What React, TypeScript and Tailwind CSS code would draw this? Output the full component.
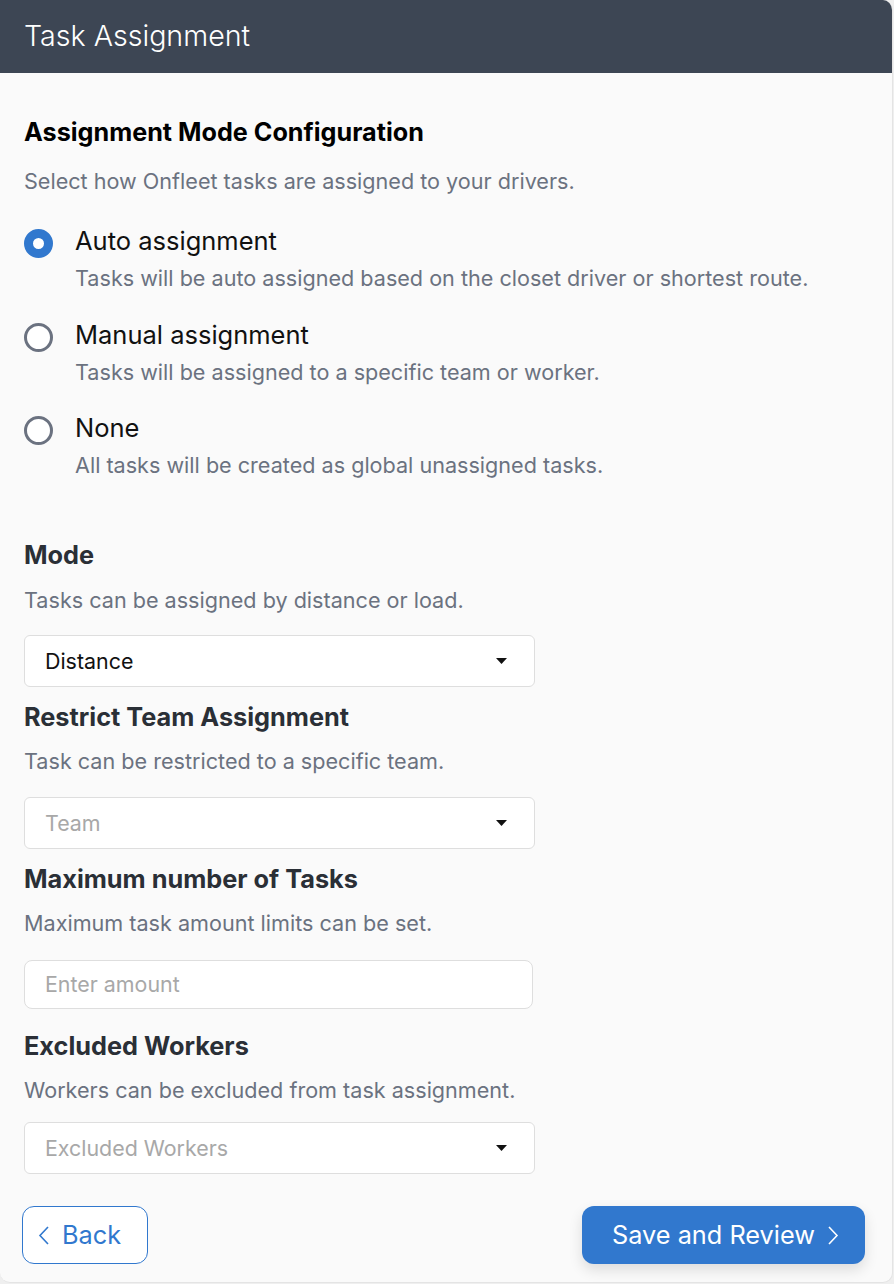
import React from "react";

const font = { fontFamily: "Inter, 'Noto Sans', sans-serif" };

function Radio({ checked }: { checked?: boolean }) {
  return checked ? (
    <span className="mt-[3px] box-border block h-[29px] w-[29px] shrink-0 rounded-full border-[9px] border-[#3178ce] bg-white" />
  ) : (
    <span className="mt-[3px] box-border block h-[29px] w-[29px] shrink-0 rounded-full border-[3px] border-[#6b7280] bg-white" />
  );
}

function Option({ label, desc, checked, className }: { label: string; desc: string; checked?: boolean; className?: string }) {
  return (
    <div className={"flex items-start gap-[22px] " + (className ?? "")}>
      <Radio checked={checked} />
      <div className="flex flex-col">
        <div className="text-[25.5px] leading-[30px] text-[#111]">{label}</div>
        <div className="mt-[8px] text-[21.6px] leading-[28px] text-[#6b7280]">{desc}</div>
      </div>
    </div>
  );
}

function Caret() {
  return (
    <svg width="11" height="6" viewBox="0 0 11 6" className="shrink-0">
      <path d="M0 0 H11 L5.5 6 Z" fill="#111" />
    </svg>
  );
}

function Select({ value, placeholder, className }: { value?: string; placeholder?: string; className?: string }) {
  return (
    <div className={"box-border flex h-[52px] w-[511px] items-center justify-between rounded-[6px] border border-[#dedede] bg-white pl-[20px] pr-[27px] " + (className ?? "")}>
      <span className={"text-[21.4px] " + (value ? "text-[#111]" : "text-[#a8a8a8]")}>{value ?? placeholder}</span>
      <Caret />
    </div>
  );
}

function Heading({ children, className }: { children: React.ReactNode; className?: string }) {
  return <div className={"text-[25.3px] font-bold leading-[30px] text-[#2a2f36] " + (className ?? "")}>{children}</div>;
}

function Desc({ children, className }: { children: React.ReactNode; className?: string }) {
  return <div className={"text-[21.6px] leading-[28px] text-[#6b7280] " + (className ?? "")}>{children}</div>;
}

export default function App() {
  return (
    <div className="min-h-[1284px] w-[894px] bg-[#efefef]" style={font}>
      <div className="box-border w-[893px] overflow-hidden rounded-r-[10px] rounded-bl-[10px] border-r border-b border-[#e4e4e4] bg-[#fafafa]">
        <div className="flex h-[73px] items-center bg-[#3d4654] pl-[24px]">
          <span className="text-[28.6px] font-light text-white">Task Assignment</span>
        </div>
        <div className="flex flex-col px-[24px] pb-[18px]">
          <div className="mt-[44px] text-[25.2px] font-bold leading-[30px] text-black">Assignment Mode Configuration</div>
          <Desc className="mt-[20px]">Select how Onfleet tasks are assigned to your drivers.</Desc>

          <Option className="mt-[31px]" checked label="Auto assignment" desc="Tasks will be auto assigned based on the closet driver or shortest route." />
          <Option className="mt-[28px]" label="Manual assignment" desc="Tasks will be assigned to a specific team or worker." />
          <Option className="mt-[27px]" label="None" desc="All tasks will be created as global unassigned tasks." />

          <Heading className="mt-[61px]">Mode</Heading>
          <Desc className="mt-[16px]">Tasks can be assigned by distance or load.</Desc>
          <Select className="mt-[21px]" value="Distance" />

          <Heading className="mt-[15px]">Restrict Team Assignment</Heading>
          <Desc className="mt-[15px]">Task can be restricted to a specific team.</Desc>
          <Select className="mt-[22px]" placeholder="Team" />

          <Heading className="mt-[15px]">Maximum number of Tasks</Heading>
          <Desc className="mt-[15px]">Maximum task amount limits can be set.</Desc>
          <div className="mt-[23px] box-border flex h-[49px] w-[509px] items-center rounded-[8px] border border-[#dedede] bg-white pl-[20px]">
            <span className="text-[21.4px] text-[#a8a8a8]">Enter amount</span>
          </div>

          <Heading className="mt-[22px]">Excluded Workers</Heading>
          <Desc className="mt-[15px]">Workers can be excluded from task assignment.</Desc>
          <Select className="mt-[18px]" placeholder="Excluded Workers" />

          <div className="mt-[32px] flex items-center justify-between pr-[3px]">
            <button className="-ml-[2px] box-border flex h-[58px] w-[126px] items-center gap-[13px] rounded-[12px] border border-[#3178ce] bg-white pl-[15px] text-[25.3px] text-[#3178ce]">
              <svg width="11" height="19" viewBox="0 0 11 19" fill="none">
                <path d="M10 1 L2 9.5 L10 18" stroke="#3178ce" strokeWidth="1.6" />
              </svg>
              Back
            </button>
            <button className="box-border flex h-[58px] w-[283px] items-center gap-[13px] rounded-[12px] bg-[#3178ce] pl-[30px] text-[25.3px] text-white shadow-[0_6px_14px_rgba(0,0,0,0.12)]">
              Save and Review
              <svg width="11" height="19" viewBox="0 0 11 19" fill="none">
                <path d="M1 1 L9 9.5 L1 18" stroke="white" strokeWidth="1.6" />
              </svg>
            </button>
          </div>
        </div>
      </div>
    </div>
  );
}
